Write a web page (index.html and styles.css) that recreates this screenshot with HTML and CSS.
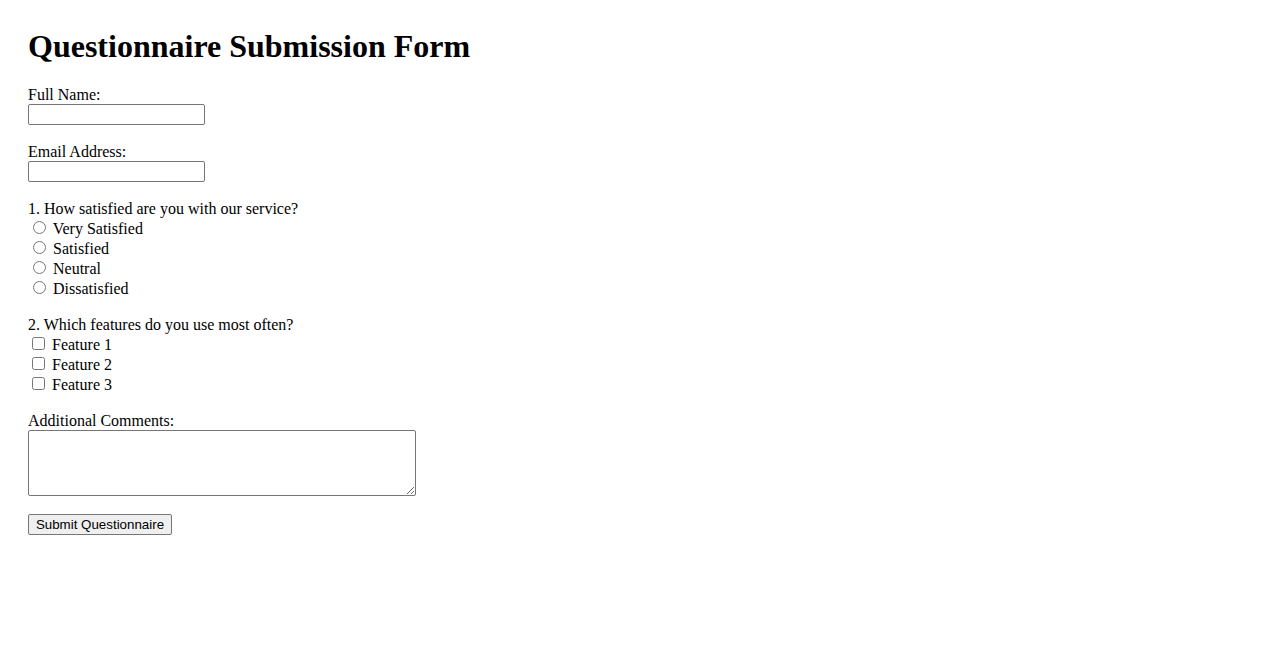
FILE: index.html
```html
<!DOCTYPE html>
<html lang="en">
<head>
<meta charset="utf-8">
<title>Questionnaire Submission Form</title>
<link rel="stylesheet" href="styles.css">
</head>
<body class="page">
<h1 class="title">Questionnaire Submission Form</h1>
<form class="form">
<label class="label" for="name">Full Name:</label><br>
<input class="text-input" type="text" id="name" name="name"><br><br>
<label class="label" for="email">Email Address:</label><br>
<input class="text-input" type="email" id="email" name="email"><br><br>
<label class="label">1. How satisfied are you with our service?</label><br>
<input class="radio" type="radio" name="sat" value="vs"> Very Satisfied<br>
<input class="radio" type="radio" name="sat" value="s"> Satisfied<br>
<input class="radio" type="radio" name="sat" value="n"> Neutral<br>
<input class="radio" type="radio" name="sat" value="d"> Dissatisfied<br><br>
<label class="label">2. Which features do you use most often?</label><br>
<input class="check" type="checkbox" name="f1"> Feature 1<br>
<input class="check" type="checkbox" name="f2"> Feature 2<br>
<input class="check" type="checkbox" name="f3"> Feature 3<br><br>
<label class="label" for="comments">Additional Comments:</label><br>
<textarea class="comments" id="comments" name="comments" rows="4" cols="50"></textarea><br><br>
<input class="submit" type="submit" value="Submit Questionnaire">
</form>
</body>
</html>
```

FILE: styles.css
```css
.page {
  margin: 28px;
  font-family: "Liberation Serif", "Times New Roman", serif;
  font-size: 16px;
  color: #000;
  background: #fff;
}
.title {
  font-size: 32px;
  font-weight: bold;
  margin: 0 0 21.44px;
}
.text-input {
  font-family: "Liberation Sans", Arial, sans-serif;
  font-size: 13.33px;
  width: 177px;
  height: 21px;
  box-sizing: border-box;
  border: 1px solid #767676;
  border-radius: 2px;
  padding: 1px 2px;
  margin: 0;
}
.comments {
  font-family: "Liberation Mono", monospace;
  font-size: 13.33px;
  width: 388px;
  height: 66px;
  box-sizing: border-box;
  border: 1px solid #767676;
  border-radius: 2px;
  padding: 2px;
  margin: 0;
  vertical-align: text-bottom;
}
.submit {
  font-family: "Liberation Sans", Arial, sans-serif;
  font-size: 13.33px;
  width: 144px;
  height: 21px;
  box-sizing: border-box;
  padding: 1px 6px;
  margin: -1px 0 0;
  border: 1px solid #767676;
  border-radius: 2px;
  background: #efefef;
  color: #000;
  vertical-align: top;
}
```
